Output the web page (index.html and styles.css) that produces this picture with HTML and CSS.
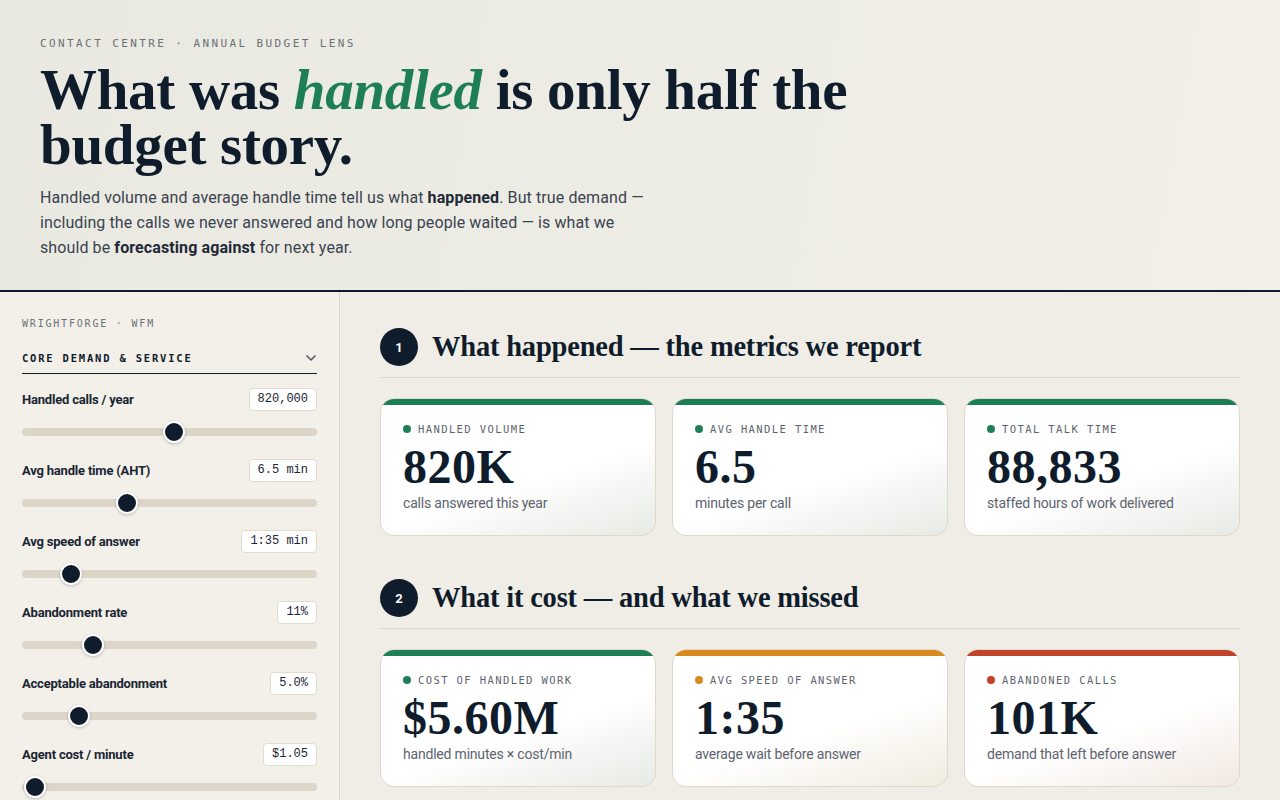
FILE: index.html
```html
<!doctype html>
<html>
    <head>
        <title>Annual Budget Lens</title>
        <meta charset="utf-8">
        <link rel="stylesheet" href="styles.css">
    </head>
    <body>
        <header class="hero">
            <div class="eyebrow">Contact centre · Annual budget lens</div>
            <h1 class="headline">What was <em>handled</em> is only half the<br>budget story.</h1>
            <p class="lede">Handled volume and average handle time tell us what <b>happened</b>. But true demand — including the calls we never answered and how long people waited — is what we should be <b>forecasting against</b> for next year.</p>
        </header>
        <div class="layout">
            <aside class="sidebar">
                <div class="brand">Wrightforge · WFM</div>
                <div class="group-title">
                    <span>Core demand &amp; service</span>
                    <svg width="12" height="8" viewBox="0 0 12 8"><polyline points="1.5,1.5 6,6 10.5,1.5" fill="none" stroke="#4b5563" stroke-width="1.5"/></svg>
                </div>
                <div class="control">
                    <div class="control-head">
                        <label>Handled calls / year</label>
                        <span class="value">820,000</span>
                    </div>
                    <input class="slider" type="range" min="200000" max="1400000" value="820000">
                </div>
                <div class="control">
                    <div class="control-head">
                        <label>Avg handle time (AHT)</label>
                        <span class="value">6.5 min</span>
                    </div>
                    <input class="slider" type="range" min="2" max="15" step="0.1" value="6.5">
                </div>
                <div class="control">
                    <div class="control-head">
                        <label>Avg speed of answer</label>
                        <span class="value">1:35 min</span>
                    </div>
                    <input class="slider" type="range" min="10" max="620" value="95">
                </div>
                <div class="control">
                    <div class="control-head">
                        <label>Abandonment rate</label>
                        <span class="value">11%</span>
                    </div>
                    <input class="slider" type="range" min="0" max="50" value="11">
                </div>
                <div class="control">
                    <div class="control-head">
                        <label>Acceptable abandonment</label>
                        <span class="value">5.0%</span>
                    </div>
                    <input class="slider" type="range" min="0" max="30" step="0.5" value="5">
                </div>
                <div class="control">
                    <div class="control-head">
                        <label>Agent cost / minute</label>
                        <span class="value">$1.05</span>
                    </div>
                    <input class="slider" type="range" min="1" max="10" step="0.01" value="1.05">
                </div>
            </aside>
            <main class="main">
                <section class="section">
                    <div class="section-head">
                        <span class="step">1</span>
                        <h2>What happened — the metrics we report</h2>
                    </div>
                    <div class="cards">
                        <div class="card green">
                            <div class="card-label"><i class="dot"></i>Handled volume</div>
                            <div class="card-value">820K</div>
                            <div class="card-note">calls answered this year</div>
                        </div>
                        <div class="card green">
                            <div class="card-label"><i class="dot"></i>Avg handle time</div>
                            <div class="card-value">6.5</div>
                            <div class="card-note">minutes per call</div>
                        </div>
                        <div class="card green">
                            <div class="card-label"><i class="dot"></i>Total talk time</div>
                            <div class="card-value">88,833</div>
                            <div class="card-note">staffed hours of work delivered</div>
                        </div>
                    </div>
                </section>
                <section class="section">
                    <div class="section-head">
                        <span class="step">2</span>
                        <h2>What it cost — and what we missed</h2>
                    </div>
                    <div class="cards">
                        <div class="card green">
                            <div class="card-label"><i class="dot"></i>Cost of handled work</div>
                            <div class="card-value">$5.60M</div>
                            <div class="card-note">handled minutes × cost/min</div>
                        </div>
                        <div class="card amber">
                            <div class="card-label"><i class="dot"></i>Avg speed of answer</div>
                            <div class="card-value">1:35</div>
                            <div class="card-note">average wait before answer</div>
                        </div>
                        <div class="card red">
                            <div class="card-label"><i class="dot"></i>Abandoned calls</div>
                            <div class="card-value">101K</div>
                            <div class="card-note">demand that left before answer</div>
                        </div>
                    </div>
                </section>
            </main>
        </div>
    </body>
</html>
```

FILE: styles.css
```css
body {
    margin: 0;
    background-color: #efede6;
    font-family: Roboto, "Liberation Sans", sans-serif;
    color: #0f1c2b;
}
.hero {
    padding: 37px 40px 30px;
    border-bottom: 2px solid #0f1c2b;
    background-image: linear-gradient(100deg, #e9e9e1, #f1efe8);
}
.eyebrow {
    font-family: "DejaVu Sans Mono", monospace;
    font-size: 11px;
    line-height: 14px;
    letter-spacing: 2.4px;
    text-transform: uppercase;
    color: #6b7078;
}
.headline {
    margin: 11px 0 0;
    font-family: "Liberation Serif", serif;
    font-weight: 700;
    font-size: 57px;
    line-height: 55px;
    letter-spacing: -0.3px;
    color: #0f1c2b;
}
.headline em {
    color: #1e7f57;
}
.lede {
    margin: 13px 0 0;
    width: 615px;
    font-size: 16px;
    line-height: 25px;
    letter-spacing: 0.1px;
    color: #3a4350;
}
.lede b {
    color: #1f2937;
}
.layout {
    display: grid;
    grid-template-columns: 340px 1fr;
}
.sidebar {
    padding: 25px 22px 40px;
    border-right: 1px solid #ddd6c8;
    background-color: #f3f0e9;
}
.brand {
    font-family: "DejaVu Sans Mono", monospace;
    font-size: 10px;
    line-height: 14px;
    letter-spacing: 1.8px;
    text-transform: uppercase;
    color: #6b7078;
}
.group-title {
    display: flex;
    justify-content: space-between;
    align-items: center;
    margin-top: 20px;
    padding-bottom: 8px;
    border-bottom: 1.5px solid #0f1c2b;
    font-family: "DejaVu Sans Mono", monospace;
    font-weight: bold;
    font-size: 10.5px;
    line-height: 14px;
    letter-spacing: 1.8px;
    text-transform: uppercase;
}
.control {
    margin-top: 14px;
}
.control + .control {
    margin-top: 16px;
}
.control-head {
    display: flex;
    justify-content: space-between;
    align-items: center;
}
.control-head label {
    font-size: 13px;
    font-weight: 700;
    letter-spacing: -0.2px;
    color: #1a2533;
}
.value {
    padding: 3px 8px;
    border: 1px solid #e2dbcd;
    border-radius: 4px;
    background-color: #ffffff;
    font-family: "Liberation Mono", monospace;
    font-size: 12px;
    line-height: 15px;
    color: #1a2533;
}
.slider {
    -webkit-appearance: none;
    appearance: none;
    display: block;
    width: 100%;
    height: 22px;
    margin: 10px 0 0;
    background: transparent;
}
.slider::-webkit-slider-runnable-track {
    height: 8px;
    border-radius: 4px;
    background-color: #ddd5c8;
}
.slider::-webkit-slider-thumb {
    -webkit-appearance: none;
    width: 22px;
    height: 22px;
    margin-top: -7px;
    border: 2.5px solid #ffffff;
    border-radius: 50%;
    box-sizing: border-box;
    background-color: #0f1c2b;
    box-shadow: 0px 1px 3px rgba(15, 28, 43, 0.25);
}
.main {
    padding: 36px 40px 40px;
}
.section + .section {
    margin-top: 43px;
}
.section-head {
    display: flex;
    align-items: center;
    gap: 14px;
    padding-bottom: 11px;
    border-bottom: 1px solid #dcd5c8;
}
.step {
    display: flex;
    align-items: center;
    justify-content: center;
    width: 38px;
    height: 38px;
    border-radius: 50%;
    background-color: #0f1c2b;
    font-size: 13px;
    font-weight: 700;
    color: #ffffff;
}
.section-head h2 {
    margin: 0;
    font-family: "Liberation Serif", serif;
    font-weight: 700;
    font-size: 28.5px;
    line-height: 34px;
    letter-spacing: -0.2px;
}
.cards {
    display: grid;
    grid-template-columns: 1fr 1fr 1fr;
    gap: 16px;
    margin-top: 20px;
}
.card {
    position: relative;
    overflow: hidden;
    padding: 23px 22px 23px;
    border: 1px solid #e0d9cb;
    border-radius: 14px;
    background-image: linear-gradient(162deg, #ffffff 58%, #e7eae4 100%);
}
.card::before {
    content: "";
    position: absolute;
    top: 0;
    left: 0;
    right: 0;
    height: 6px;
    background-color: var(--accent);
}
.green { --accent: #1e7f57; }
.amber { --accent: #d98a1f; background-image: linear-gradient(162deg, #ffffff 58%, #f1ebdf 100%); }
.red { --accent: #c0432a; background-image: linear-gradient(162deg, #ffffff 58%, #f2e8e1 100%); }
.card-label {
    display: flex;
    align-items: center;
    gap: 7px;
    font-family: "DejaVu Sans Mono", monospace;
    font-size: 10.5px;
    line-height: 14px;
    letter-spacing: 1.4px;
    text-transform: uppercase;
    color: #5d6470;
}
.dot {
    width: 8px;
    height: 8px;
    border-radius: 50%;
    background-color: var(--accent);
}
.card-value {
    margin-top: 7px;
    font-family: "Liberation Serif", serif;
    font-weight: 700;
    font-size: 48px;
    line-height: 48px;
    letter-spacing: 0.5px;
    color: #0f1c2b;
}
.card-note {
    margin-top: 3px;
    font-size: 14px;
    line-height: 18px;
    letter-spacing: -0.2px;
    color: #5d6470;
}
```
